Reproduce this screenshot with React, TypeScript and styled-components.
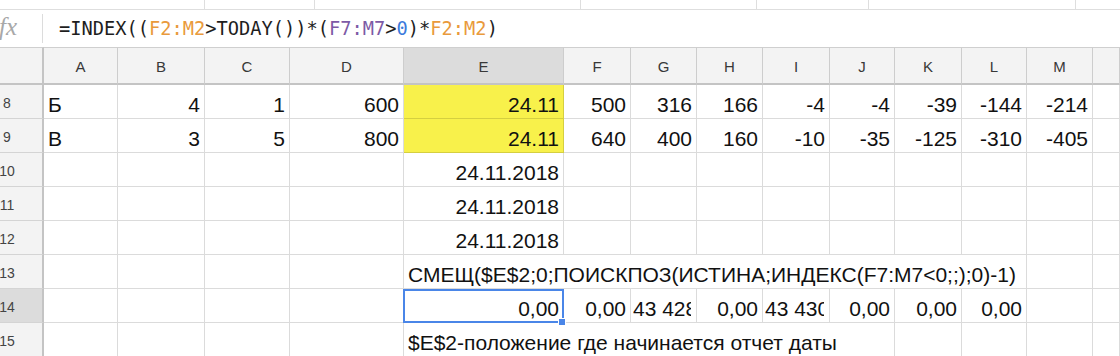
import React from 'react';
import styled, { createGlobalStyle } from 'styled-components';

const Global = createGlobalStyle`
  html, body { margin: 0; padding: 0; background: #fff; overflow: hidden; }
  body { width: 1120px; height: 356px; font-family: "Liberation Sans", Arial, sans-serif; color: #111; }
  * { box-sizing: border-box; }
`;

const Page = styled.div`
  width: 1120px;
  height: 356px;
  overflow: hidden;
  display: flex;
  flex-direction: column;
`;

const TopStrip = styled.div`
  flex: none;
  display: flex;
  height: 10px;
  border-bottom: 1px solid #dedede;
`;

const ToolSlot = styled.div<{ $w?: number }>`
  flex: ${(p) => (p.$w ? `0 0 ${p.$w}px` : '1 1 auto')};
  border-right: ${(p) => (p.$w ? '1px solid #dedede' : 'none')};
`;

const FormulaBar = styled.div`
  flex: none;
  height: 37px;
  display: flex;
  align-items: center;
`;

const Fx = styled.div`
  width: 43px;
  flex: none;
  font-family: "Liberation Serif", "Times New Roman", serif;
  font-style: italic;
  font-size: 25px;
  line-height: 28px;
  color: #a8a8a8;
  margin-left: -1px;
  padding-bottom: 3px;
`;

const Divider = styled.div`
  flex: none;
  width: 1px;
  height: 29px;
  background: #dcdcdc;
`;

const Formula = styled.div`
  margin-left: 16px;
  font-family: "DejaVu Sans Mono", "Liberation Mono", monospace;
  font-size: 18.7px;
  line-height: 24px;
  color: #1e1e1e;
  white-space: pre;
`;

const Ref = styled.span<{ $c: string }>`
  color: ${(p) => p.$c};
`;

const Sheet = styled.div`
  display: grid;
  grid-template-columns: 44px 74px 87px 85px 114px 160px 67px 66px 66px 67px 65px 67px 65px 66px 1fr;
  grid-template-rows: 38px;
  grid-auto-rows: 34px;
`;

const Corner = styled.div`
  background: #f3f3f3;
  border-top: 1px solid #cfcfcf;
  border-bottom: 2px solid #c4c4c4;
  border-right: 2px solid #c4c4c4;
`;

const ColHead = styled.div<{ $active?: boolean }>`
  background: ${(p) => (p.$active ? '#dcdcdc' : '#f3f3f3')};
  border-top: 1px solid #cfcfcf;
  border-bottom: 2px solid #c4c4c4;
  border-right: 1px solid #cdcdcd;
  display: flex;
  align-items: center;
  justify-content: center;
  padding-top: 3px;
  font-size: 15px;
  line-height: 18px;
  color: #383838;
`;

const RowHead = styled.div<{ $active?: boolean }>`
  background: ${(p) => (p.$active ? '#dcdcdc' : '#f3f3f3')};
  border-right: 2px solid #c4c4c4;
  border-bottom: 1px solid #d4d4d4;
  display: flex;
  align-items: center;
  justify-content: center;
  padding: 3px 28px 0 0;
  font-size: 14px;
  line-height: 17px;
  color: #444;
  white-space: nowrap;
`;

const Cell = styled.div<{ $align: 'left' | 'right'; $bg?: string; $span?: number; $tight?: boolean; $selected?: boolean }>`
  grid-column: ${(p) => (p.$span ? `span ${p.$span}` : 'auto')};
  position: ${(p) => (p.$selected ? 'relative' : 'static')};
  background: ${(p) => p.$bg || '#fff'};
  border-right: 1px solid rgba(0, 0, 0, 0.14);
  border-bottom: 1px solid rgba(0, 0, 0, 0.14);
  display: flex;
  align-items: flex-end;
  justify-content: ${(p) => (p.$align === 'left' ? 'flex-start' : 'flex-end')};
  padding: ${(p) => (p.$tight ? '0 5px 1px 2px' : '0 4px 1px 4px')};
  font-size: 21px;
  line-height: 24px;
  color: #111;
  min-width: 0;
`;

const CellText = styled.span`
  display: block;
  overflow: hidden;
  white-space: nowrap;
  max-width: 100%;
`;

const Selection = styled.div`
  position: absolute;
  top: 0;
  left: -1px;
  right: -1px;
  bottom: -1px;
  border: 2px solid #4a86e8;
  pointer-events: none;
`;

const Handle = styled.div`
  position: absolute;
  right: -4px;
  bottom: -5px;
  width: 8px;
  height: 8px;
  background: #4a86e8;
  border: 1px solid #fff;
`;

type CellDef = {
  v?: string;
  a?: 'left' | 'right';
  bg?: string;
  span?: number;
  clip?: boolean;
  sel?: boolean;
};

const Y = '#f8f14b';
const COLS = ['A', 'B', 'C', 'D', 'E', 'F', 'G', 'H', 'I', 'J', 'K', 'L', 'M', ''];
const empty = (n: number): CellDef[] => Array.from({ length: n }, () => ({}));

const ROWS: { n: number; cells: CellDef[] }[] = [
  {
    n: 8,
    cells: [
      { v: 'Б', a: 'left' }, { v: '4' }, { v: '1' }, { v: '600' }, { v: '24.11', bg: Y },
      { v: '500' }, { v: '316' }, { v: '166' }, { v: '-4' }, { v: '-4' }, { v: '-39' }, { v: '-144' }, { v: '-214' }, {},
    ],
  },
  {
    n: 9,
    cells: [
      { v: 'В', a: 'left' }, { v: '3' }, { v: '5' }, { v: '800' }, { v: '24.11', bg: Y },
      { v: '640' }, { v: '400' }, { v: '160' }, { v: '-10' }, { v: '-35' }, { v: '-125' }, { v: '-310' }, { v: '-405' }, {},
    ],
  },
  { n: 10, cells: [...empty(4), { v: '24.11.2018' }, ...empty(9)] },
  { n: 11, cells: [...empty(4), { v: '24.11.2018' }, ...empty(9)] },
  { n: 12, cells: [...empty(4), { v: '24.11.2018' }, ...empty(9)] },
  {
    n: 13,
    cells: [...empty(4), { v: 'СМЕЩ($E$2;0;ПОИСКПОЗ(ИСТИНА;ИНДЕКС(F7:M7<0;;);0)-1)', a: 'left', span: 8 }, ...empty(2)],
  },
  {
    n: 14,
    cells: [
      ...empty(4), { v: '0,00', sel: true }, { v: '0,00' }, { v: '43 428', a: 'left', clip: true }, { v: '0,00' },
      { v: '43 430', a: 'left', clip: true }, { v: '0,00' }, { v: '0,00' }, { v: '0,00' }, {}, {},
    ],
  },
  {
    n: 15,
    cells: [...empty(4), { v: '$E$2-положение где начинается отчет даты', a: 'left', span: 6 }, ...empty(4)],
  },
];

const SLOTS = [205, 110, 266, 176, 112, 207, 0];

export default function App() {
  return (
    <Page>
      <Global />
      <TopStrip>
        {SLOTS.map((w, i) => (
          <ToolSlot key={i} $w={w || undefined} />
        ))}
      </TopStrip>
      <FormulaBar>
        <Fx>fx</Fx>
        <Divider />
        <Formula>
          =INDEX((<Ref $c="#e99a3c">F2:M2</Ref>&gt;TODAY())*(<Ref $c="#7d5aa6">F7:M7</Ref>&gt;<Ref $c="#3b7bdc">0</Ref>)*<Ref $c="#e99a3c">F2:M2</Ref>)
        </Formula>
      </FormulaBar>
      <Sheet>
        <Corner />
        {COLS.map((c, i) => (
          <ColHead key={i} $active={c === 'E'}>
            {c}
          </ColHead>
        ))}
        {ROWS.map((r) => (
          <React.Fragment key={r.n}>
            <RowHead $active={r.n === 14}>{r.n}</RowHead>
            {r.cells.map((c, i) => (
              <Cell key={i} $align={c.a || 'right'} $bg={c.bg} $span={c.span} $tight={c.clip} $selected={c.sel}>
                {c.v && <CellText>{c.v}</CellText>}
                {c.sel && (
                  <Selection>
                    <Handle />
                  </Selection>
                )}
              </Cell>
            ))}
          </React.Fragment>
        ))}
      </Sheet>
    </Page>
  );
}
